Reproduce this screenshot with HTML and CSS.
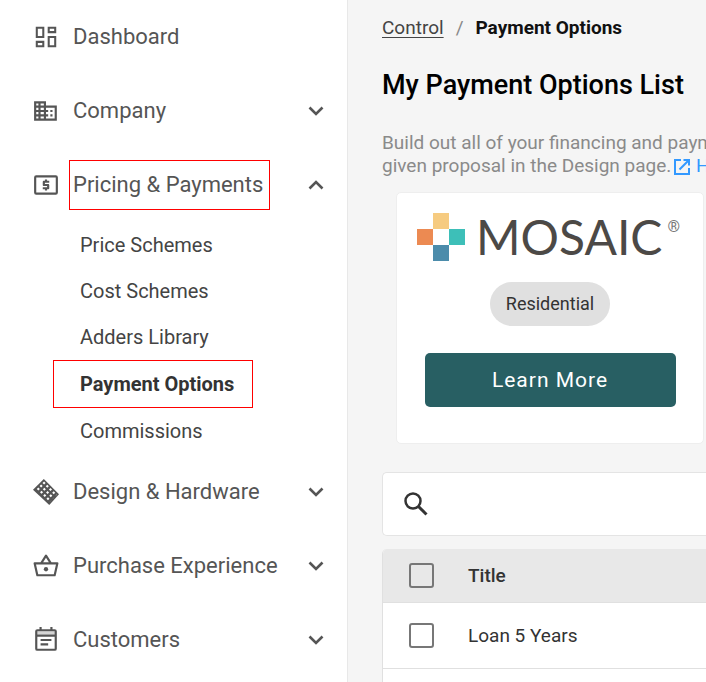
FILE: index.html
```html
<!DOCTYPE html>
<html lang="en">

<head>
    <meta charset="UTF-8">
    <meta name="viewport" content="width=device-width, initial-scale=1.0">
    <title>Payment Options</title>
    <link rel="stylesheet" href="styles.css">
</head>

<body>

    <!-- shared chevron shape -->
    <svg class="defs" width="0" height="0">
        <symbol id="chevron" viewBox="0 0 16 10">
            <path d="M1.500 1.500L8 8l6.500-6.500" fill="none" stroke="currentColor" stroke-width="2.600"/>
        </symbol>
    </svg>

    <nav class="sidebar">
        <a href="#" class="nav-item">
            <svg class="icon" viewBox="0 0 24 24"><path d="M3.500 3.500h6v8.500h-6zM14.500 3.500h6v4h-6zM3.500 16.500h6v4h-6zM14.500 12h6v8.500h-6z" fill="none" stroke="currentColor" stroke-width="1.900"/></svg>
            <span class="label">Dashboard</span>
        </a>
        <a href="#" class="nav-item">
            <svg class="icon" viewBox="0 0 24 24"><path d="M12 7V3H1v18h21V7H12zM5 19H3v-2h2v2zm0-4H3v-2h2v2zm0-4H3V9h2v2zm0-4H3V5h2v2zm5 12H7v-2h3v2zm0-4H7v-2h3v2zm0-4H7V9h3v2zm0-4H7V5h3v2zm10 12h-8v-2h2v-2h-2v-2h2v-2h-2V9h8v10zm-2-8h-2v2h2v-2zm0 4h-2v2h2v-2z"/></svg>
            <span class="label">Company</span>
            <svg class="chevron"><use href="#chevron"/></svg>
        </a>
        <a href="#" class="nav-item">
            <svg class="icon" viewBox="0 0 24 24">
                <rect x="2" y="4" width="20" height="16" rx="1" fill="none" stroke="currentColor" stroke-width="2"/>
                <path d="M11 17h2v-1h1c.55 0 1-.45 1-1v-3c0-.55-.45-1-1-1h-3v-1h4V8h-2V7h-2v1h-1c-.55 0-1 .45-1 1v3c0 .55.45 1 1 1h3v1H9v2h2v1z"/>
            </svg>
            <span class="label marked">Pricing &amp; Payments</span>
            <svg class="chevron up"><use href="#chevron"/></svg>
        </a>
        <div class="submenu">
            <a href="#">Price Schemes</a>
            <a href="#">Cost Schemes</a>
            <a href="#">Adders Library</a>
            <a href="#" class="active">Payment Options</a>
            <a href="#">Commissions</a>
        </div>
        <a href="#" class="nav-item">
            <svg class="icon" viewBox="0 0 24 24">
                <path d="M10 0L24 14L15 24L0 10z"/>
                <g stroke="#fff" stroke-width="2" stroke-dasharray="2 2.200" fill="none">
                    <path d="M9.500 3L21.500 15M6.800 5.800L18.800 17.800M4.200 8.600L16.200 20.600"/>
                </g>
            </svg>
            <span class="label">Design &amp; Hardware</span>
            <svg class="chevron"><use href="#chevron"/></svg>
        </a>
        <a href="#" class="nav-item">
            <svg class="icon" viewBox="0 0 24 24">
                <path d="M1.500 9.500h21L20 20.500H4zM7.500 9.500L12 2.500l4.500 7" fill="none" stroke="currentColor" stroke-width="2" stroke-linejoin="round"/>
                <circle cx="12" cy="15" r="2"/>
            </svg>
            <span class="label">Purchase Experience</span>
            <svg class="chevron"><use href="#chevron"/></svg>
        </a>
        <a href="#" class="nav-item">
            <svg class="icon" viewBox="0 0 24 24">
                <rect x="3" y="3" width="18" height="18" rx="1" fill="none" stroke="currentColor" stroke-width="2"/>
                <path d="M3 4h18v3H3z" opacity=".25"/>
                <path d="M6 0h2v3H6zM16 0h2v3h-2zM3 7h18v2H3zM7 11h10v2H7zM7 15h7v2H7z"/>
            </svg>
            <span class="label">Customers</span>
            <svg class="chevron"><use href="#chevron"/></svg>
        </a>
    </nav>

    <main class="content">
        <div class="breadcrumb">
            <a href="#">Control</a>
            <span class="slash">/</span>
            <strong>Payment Options</strong>
        </div>

        <h1>My Payment Options List</h1>

        <p class="intro">
            Build out all of your financing and payment<br>
            given proposal in the Design page.<a href="#"><svg class="open-icon" viewBox="0 0 18 18"><path d="M8 2H2v14h14v-6M10.500 2H16v5.500M16 2L6.500 11.500" fill="none" stroke="currentColor" stroke-width="2"/></svg> Help</a>
        </p>

        <section class="card">
            <div class="logo">
                <svg class="logo-mark" viewBox="0 0 48 48">
                    <rect x="16" y="0" width="16" height="16" fill="#f6cb80"/>
                    <rect x="0" y="16" width="16" height="16" fill="#ec8a52"/>
                    <rect x="32" y="16" width="16" height="16" fill="#3dbfb8"/>
                    <rect x="16" y="32" width="16" height="16" fill="#4c8cab"/>
                </svg>
                <span class="logo-name">MOSAIC</span>
                <sup class="logo-reg">®</sup>
            </div>
            <span class="chip">Residential</span>
            <button type="button" class="learn-more">Learn More</button>
        </section>

        <div class="search">
            <label for="search" aria-label="Search">
                <svg viewBox="0 0 24 24"><circle cx="9" cy="9" r="7.500" fill="none" stroke="currentColor" stroke-width="2.500"/><path d="M14.500 14.500L22.500 22.500" stroke="currentColor" stroke-width="3"/></svg>
            </label>
            <input type="text" id="search">
        </div>

        <div class="table-box">
            <table>
                <thead>
                    <tr>
                        <th class="check"><input type="checkbox" aria-label="Select all"></th>
                        <th>Title</th>
                    </tr>
                </thead>
                <tbody>
                    <tr>
                        <td class="check"><input type="checkbox" id="loan5"></td>
                        <td><label for="loan5">Loan 5 Years</label></td>
                    </tr>
                </tbody>
            </table>
        </div>
    </main>

</body>

</html>
```
FILE: styles.css
```css
* {
    box-sizing: border-box;
}

body {
    margin: 0;
    display: flex;
    height: 100vh;
    overflow: hidden;
    font-family: Roboto, "Liberation Sans", sans-serif;
    background-color: #f5f5f5;
    color: #333;
}

a {
    color: inherit;
    text-decoration: none;
}

.defs {
    position: absolute;
}

/* Sidebar */
.sidebar {
    flex: 0 0 348px;
    background-color: #fff;
    border-right: 1px solid #e8e8e8;
}

.nav-item {
    display: flex;
    align-items: center;
    height: 74px;
    padding: 0 23px 0 33px;
    font-size: 22px;
    color: #555;
}

.icon {
    width: 26px;
    height: 26px;
    margin-right: 10px;
    fill: currentColor;
}

.label {
    padding: 0 4px;
    line-height: 48px;
}

.marked {
    width: 201px;
    padding: 0 3px;
    border: 1px solid #f00;
    white-space: nowrap;
}

.chevron {
    width: 16px;
    height: 10px;
    margin-left: auto;
}

.chevron.up {
    transform: rotate(180deg);
}

.submenu {
    margin-left: 53px;
    padding-bottom: 1px;
}

.submenu a {
    display: block;
    padding-left: 27px;
    font-size: 20px;
    line-height: 46px;
    color: #444;
}

.submenu .active {
    width: 200px;
    padding-left: 26px;
    border: 1px solid #f00;
    font-weight: bold;
    color: #333;
}

/* Main content */
.content {
    flex: 1;
    min-width: 0;
    display: flex;
    flex-direction: column;
    padding: 16px 0 0 34px;
    overflow: hidden;
    white-space: nowrap;
}

.breadcrumb {
    display: flex;
    gap: 12px;
    font-size: 19px;
    line-height: 24px;
    color: #444;
}

.breadcrumb a {
    text-decoration: underline;
    text-underline-offset: 3px;
}

.breadcrumb .slash {
    color: #888;
}

.breadcrumb strong {
    color: #111;
}

h1 {
    margin: 27px 0 0;
    font-size: 27px;
    font-weight: 500;
    line-height: 36px;
    color: #000;
}

.intro {
    margin: 28px 0 0;
    font-size: 19px;
    line-height: 23px;
    color: #8a8a8a;
}

.intro a {
    color: #3399ff;
}

.open-icon {
    width: 18px;
    height: 18px;
    margin-left: 2px;
    vertical-align: -4px;
}

.card {
    display: flex;
    flex-direction: column;
    align-items: center;
    width: 308px;
    height: 252px;
    margin: 15px 0 0 14px;
    padding: 20px;
    background-color: #fff;
    border: 1px solid #eee;
    border-radius: 5px;
}

.logo {
    display: flex;
    width: 100%;
}

.logo-mark {
    width: 48px;
    height: 48px;
}

.logo-name {
    margin-left: 11px;
    font-family: Lato, sans-serif;
    font-size: 48px;
    line-height: 48px;
    color: #4c4946;
}

.logo-reg {
    margin-left: 5px;
    font-size: 16px;
    line-height: 28px;
    color: #777;
}

.chip {
    margin-top: 21px;
    padding: 0 16px;
    border-radius: 22px;
    background-color: #e0e0e0;
    font-size: 18px;
    line-height: 44px;
}

.learn-more {
    width: 251px;
    height: 54px;
    margin-top: 27px;
    border: none;
    border-radius: 5px;
    background-color: #285f63;
    color: #fff;
    font-family: inherit;
    font-size: 21px;
    letter-spacing: 1px;
    cursor: pointer;
}

.search {
    display: flex;
    align-items: center;
    height: 64px;
    margin-top: 28px;
    padding-left: 21px;
    background-color: #fff;
    border: 1px solid #e4e4e4;
    border-right: none;
    border-radius: 5px 0 0 5px;
}

.search svg {
    display: block;
    width: 24px;
    height: 24px;
}

.search input {
    flex: 1;
    min-width: 0;
    height: 40px;
    margin-left: 12px;
    border: none;
    outline: none;
    font-size: 20px;
}

.table-box {
    flex: 1;
    margin-top: 13px;
    background-color: #fff;
    border-left: 1px solid #e0e0e0;
    border-radius: 5px 0 0 0;
    overflow: hidden;
}

table {
    width: 100%;
    border-collapse: collapse;
    font-size: 19px;
}

th,
td {
    height: 66px;
    padding: 0;
    border-bottom: 1px solid #e0e0e0;
    text-align: left;
}

th {
    height: 53px;
    background-color: #e8e8e8;
    font-weight: 500;
}

.check {
    width: 85px;
    padding-left: 26px;
}

.check input {
    display: block;
    appearance: none;
    width: 25px;
    height: 25px;
    margin: 0;
    border: 2px solid #777;
    border-radius: 3px;
}
```
